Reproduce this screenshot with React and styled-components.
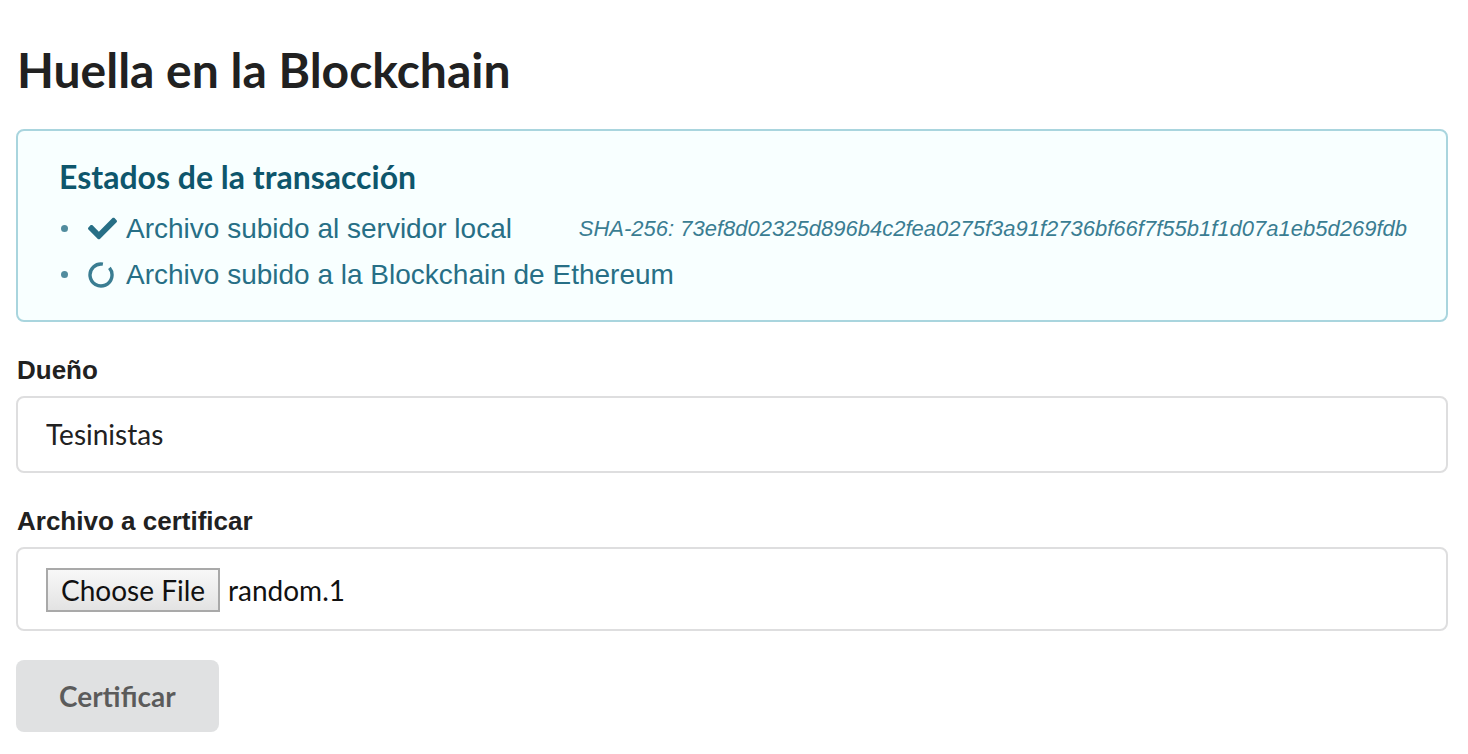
import React from "react";
import styled, { createGlobalStyle } from "styled-components";
import { FaCheck } from "react-icons/fa";

const GlobalStyle = createGlobalStyle`
    body {
        margin: 0;
        background: #ffffff;
        font-family: "Lato", "Liberation Sans", sans-serif;
        color: rgba(0, 0, 0, 0.87);
    }
`;

const Page = styled.div`
    padding: 0 20px 0 16px;
`;

const Title = styled.h1`
    margin: 41px 0 30px 1px;
    font-family: "Lato", sans-serif;
    font-weight: 700;
    font-size: 48px;
    line-height: 1.2;
    color: #212121;
`;

const Message = styled.div`
    background: #f8ffff;
    border: 2px solid #a9d5de;
    border-radius: 8px;
    padding: 28px 39px 25px 41px;
    color: #276f86;
`;

const MessageHeader = styled.div`
    font-family: "Lato", sans-serif;
    font-weight: 700;
    font-size: 32px;
    line-height: 36px;
    color: #0e566c;
    margin-bottom: 14px;
`;

const StatusList = styled.ul`
    list-style: none;
    margin: 0;
    padding: 0;
    display: flex;
    flex-direction: column;
    gap: 6px;
`;

const StatusItem = styled.li`
    display: flex;
    align-items: center;
    font-family: "Liberation Sans", Arial, sans-serif;
    font-size: 28px;
    line-height: 40px;
`;

const Bullet = styled.span`
    width: 29px;
    flex: none;
    display: flex;
    align-items: center;

    &::before {
        content: "";
        margin-left: 2px;
        width: 7px;
        height: 7px;
        border-radius: 50%;
        background: rgba(39, 111, 134, 0.8);
    }
`;

const IconBox = styled.span`
    width: 38px;
    flex: none;
    display: flex;
    align-items: center;
`;

const Hash = styled.span`
    margin-left: auto;
    font-style: italic;
    font-size: 22px;
    color: #3a7d92;
`;

const Field = styled.div`
    margin-top: 33px;
`;

const Label = styled.label`
    display: block;
    margin: 0 0 11px 1px;
    font-family: "Liberation Sans", Arial, sans-serif;
    font-weight: 700;
    font-size: 26px;
    line-height: 30px;
    color: #212121;
`;

const TextInput = styled.input`
    display: block;
    box-sizing: border-box;
    width: 100%;
    margin: 0;
    padding: 19px 28px 20px;
    border: 2px solid #dededf;
    border-radius: 8px;
    font-family: "Lato", sans-serif;
    font-size: 28px;
    line-height: 34px;
    color: #212121;
    background: #ffffff;
    outline: none;
`;

const FileBox = styled.div`
    display: flex;
    align-items: center;
    gap: 8px;
    padding: 19px 28px 17px;
    border: 2px solid #dededf;
    border-radius: 8px;
    font-family: "Lato", sans-serif;
    font-size: 28px;
    color: #111111;
`;

const FileButton = styled.button`
    box-sizing: border-box;
    height: 44px;
    padding: 0 13px;
    border: 2px solid #a9a9a9;
    background: linear-gradient(#f8f8f8, #e3e3e3);
    font-family: "Lato", sans-serif;
    font-size: 28px;
    color: #111111;
    cursor: pointer;
`;

const SubmitButton = styled.button`
    margin-top: 29px;
    padding: 22px 43px;
    border: none;
    border-radius: 8px;
    background: #e0e1e2;
    color: rgba(0, 0, 0, 0.6);
    font-family: "Lato", sans-serif;
    font-weight: 700;
    font-size: 28px;
    line-height: 28px;
    cursor: pointer;
`;

function NotchIcon() {
    return (
        <svg width="26" height="26" viewBox="0 0 26 26">
            <path
                d="M 21.43 5.93 A 11 11 0 1 1 14.91 2.17"
                fill="none"
                stroke="#3a7d92"
                strokeWidth="3.4"
            />
        </svg>
    );
}

const statuses = [
    { text: "Archivo subido al servidor local", done: true, hash: "SHA-256: 73ef8d02325d896b4c2fea0275f3a91f2736bf66f7f55b1f1d07a1eb5d269fdb" },
    { text: "Archivo subido a la Blockchain de Ethereum", done: false }
];

export default function App() {
    return (
        <Page>
            <GlobalStyle />
            <Title>Huella en la Blockchain</Title>
            <Message>
                <MessageHeader>Estados de la transacción</MessageHeader>
                <StatusList>
                    {statuses.map((s) => (
                        <StatusItem key={s.text}>
                            <Bullet />
                            <IconBox>
                                {s.done ? <FaCheck size={29} color="#276f86" /> : <NotchIcon />}
                            </IconBox>
                            {s.text}
                            {s.hash && <Hash>{s.hash}</Hash>}
                        </StatusItem>
                    ))}
                </StatusList>
            </Message>
            <Field>
                <Label>Dueño</Label>
                <TextInput defaultValue="Tesinistas" />
            </Field>
            <Field>
                <Label>Archivo a certificar</Label>
                <FileBox>
                    <FileButton type="button">Choose File</FileButton>
                    <span>random.1</span>
                </FileBox>
            </Field>
            <SubmitButton type="button">Certificar</SubmitButton>
        </Page>
    );
}
